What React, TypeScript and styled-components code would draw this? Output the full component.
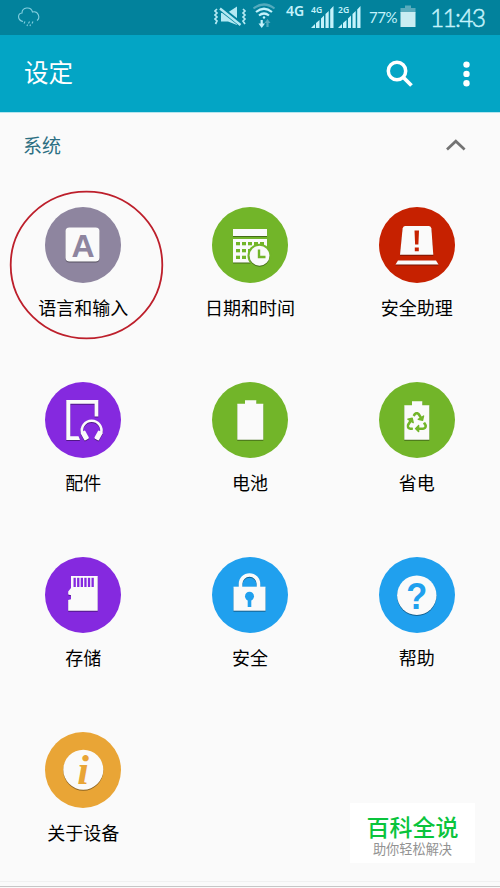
import React from "react";
import styled, { createGlobalStyle } from "styled-components";
import { FaRecycle } from "react-icons/fa";

const GlobalStyle = createGlobalStyle`
  * { box-sizing: border-box; }
  body {
    margin: 0;
    background: #fafafa;
    font-family: "Noto Sans CJK SC", "Noto Sans", sans-serif;
  }
`;

const Screen = styled.div`
  position: relative;
  width: 500px;
  height: 888px;
  display: flex;
  flex-direction: column;
  overflow: hidden;
  background: #fafafa;
`;

const StatusBar = styled.div`
  flex: none;
  height: 35px;
  display: flex;
  align-items: flex-start;
  padding: 0 13px 0 16px;
  background: #02829c;
  color: #c4f2fb;
`;

const StatusIcon = styled.svg<{ $gap?: number }>`
  flex: none;
  display: block;
  margin-left: ${(p) => p.$gap ?? 0}px;
`;

const Spacer = styled.div`
  flex: 1;
`;

const Network = styled.span`
  width: 19px;
  margin: 3px 0 0 10px;
  font: 600 14px/16px "Noto Sans", sans-serif;
`;

const Percent = styled.span`
  width: 29px;
  margin: 8px 0 0 7px;
  font: 400 15px/18px Lato, sans-serif;
  letter-spacing: -0.5px;
  white-space: nowrap;
`;

const Clock = styled.span`
  width: 57px;
  margin: 4px 0 0 14px;
  font: 300 24.5px/28px Lato, sans-serif;
  letter-spacing: -1.7px;
  white-space: nowrap;
  -webkit-text-stroke: 0.5px #c4f2fb;
`;

const Header = styled.header`
  flex: none;
  height: 78px;
  display: flex;
  align-items: center;
  padding: 0 25px 0 24px;
  background: #03a5c5;
  border-bottom: 1px solid #b5e5ee;
  color: #fff;
`;

const Title = styled.h1`
  flex: 1;
  margin: 0 0 3px;
  font-size: 24.5px;
  line-height: 36px;
  font-weight: 400;
`;

const IconButton = styled.button<{ $gap?: number }>`
  display: flex;
  margin: 0 0 0 ${(p) => p.$gap ?? 0}px;
  padding: 0;
  border: 0;
  background: none;
  color: inherit;
`;

const SectionHeader = styled.div`
  flex: none;
  height: 94px;
  display: flex;
  justify-content: space-between;
  align-items: flex-start;
  padding: 18px 34px 0 23px;
  color: #2c6f82;
  font-size: 19px;
  line-height: 28px;
`;

const Chevron = styled.svg`
  margin-top: 7px;
`;

const Grid = styled.main`
  display: grid;
  grid-template-columns: repeat(3, 1fr);
  grid-auto-rows: 175px;
`;

const Tile = styled.div`
  position: relative;
  display: flex;
  flex-direction: column;
  align-items: center;
`;

const Disc = styled.svg<{ $color: string }>`
  display: block;
  flex: none;
  width: 76px;
  height: 76px;
  border-radius: 50%;
  background: ${(p) => p.$color};
  color: ${(p) => p.$color};
  fill: #fafafa;

  .lift {
    filter: drop-shadow(0.6px 1px 0.4px rgba(0, 0, 0, 0.4));
  }
  .cut {
    fill: currentColor;
  }
`;

const Label = styled.span`
  margin-top: 10px;
  font-size: 18px;
  line-height: 28px;
  color: #000;
  white-space: nowrap;
`;

const Marker = styled.svg`
  position: absolute;
  left: 9px;
  top: -17px;
  pointer-events: none;
`;

const Badge = styled.div`
  position: absolute;
  left: 350px;
  top: 803px;
  width: 125px;
  height: 60px;
  padding-top: 8px;
  background: #fff;
  text-align: center;
`;

const BadgeTitle = styled.div`
  color: #0ac43c;
  font-size: 23px;
  font-weight: 500;
  line-height: 30px;
`;

const BadgeText = styled.div`
  color: #929292;
  font-size: 13.2px;
  line-height: 15px;
`;

const BottomEdge = styled.div`
  position: absolute;
  left: 0;
  right: 0;
  bottom: 1px;
  height: 6px;
  border-top: 1px solid #f0f0f0;
  border-bottom: 1px solid #c6c6c6;
`;

const Signal = ({ name, gap }: { name: string; gap: number }) => (
  <StatusIcon $gap={gap} width="24" height="35" fill="#c4f2fb">
    <text x="0" y="13" fontFamily="Noto Sans" fontWeight="600" fontSize="8.6">{name}</text>
    <path d="M0 28 4 24V28ZM5 23 8.500 20V28H5ZM10 18.500 13 15.500V28H10ZM14.500 14 17.700 11V28H14.500ZM19.200 9.500 22.500 6V28H19.200Z" />
  </StatusIcon>
);

const tiles: { label: string; color: string; icon: React.ReactNode }[] = [
  {
    label: "语言和输入",
    color: "#8e859f",
    icon: (
      <>
        <rect className="lift" x="20.500" y="20.500" width="34" height="34" rx="4" />
        <text className="cut" x="38" y="49.500" textAnchor="middle" fontFamily="Liberation Sans" fontWeight="700" fontSize="32">A</text>
      </>
    ),
  },
  {
    label: "日期和时间",
    color: "#72b529",
    icon: (
      <>
        <g className="lift">
          <rect x="21" y="22" width="34" height="7" />
          <rect x="21" y="32" width="34" height="23.500" />
        </g>
        {[35, 42, 48.7].map((y) =>
          [24, 30, 36, 42, 48].map((x) => (
            <rect className="cut" key={`${x}-${y}`} x={x} y={y} width="4" height="3.300" />
          ))
        )}
        <circle className="cut" cx="47.500" cy="48.700" r="12" />
        <circle className="lift" cx="47.500" cy="48.700" r="10" />
        <path d="M47 42.500V50H53.500" fill="none" stroke="currentColor" strokeWidth="2.400" />
      </>
    ),
  },
  {
    label: "安全助理",
    color: "#c62100",
    icon: (
      <>
        <path className="lift" d="M26 19H50Q52 19 52.400 21.500L54.300 47.700H21L23.600 21.500Q24 19 26 19Z" />
        <path className="lift" d="M19 53.500H57L59.500 57.500H16.500Z" />
        <path className="cut" d="M35.500 23.500H40L39.400 37.500H36.100ZM35.800 40.500H39.800V44.300H35.800Z" />
      </>
    ),
  },
  {
    label: "配件",
    color: "#8529df",
    icon: (
      <g className="lift">
        <path d="M21.300 18H53.300V34.500H49.600V21.800H25.300V54.200H33.500L35 58H21.300Z" />
        <path d="M37.300 51.500A9.800 9.800 0 1 1 56 51.500" fill="none" stroke="#fafafa" strokeWidth="2.600" />
        <rect x="-2.600" y="-4.500" width="5.200" height="9" rx="1" transform="translate(39.800 53.500) rotate(-28)" />
        <rect x="-2.600" y="-4.500" width="5.200" height="9" rx="1" transform="translate(53.500 53.500) rotate(28)" />
      </g>
    ),
  },
  {
    label: "电池",
    color: "#72b529",
    icon: <path className="lift" d="M25.300 21.700H33V18.300H44.300V21.700H51.300V57.700H25.300Z" />,
  },
  {
    label: "省电",
    color: "#72b529",
    icon: (
      <>
        <path className="lift" d="M25.300 23.300H33V19.300H43.300V23.300H50.300V57.700H25.300Z" />
        <FaRecycle className="cut" x={27.5} y={30} size={20.5} />
      </>
    ),
  },
  {
    label: "存储",
    color: "#8529df",
    icon: (
      <>
        <path className="lift" d="M26 19H52.700V53.700H23.200V43L26 42.300V38.300L23.200 37.500V34.500L26 31Z" />
        {[0, 1, 2, 3, 4, 5].map((i) => (
          <rect className="cut" key={i} x={28.5 + i * 3.6} y="20.800" width="2.300" height="9.200" />
        ))}
      </>
    ),
  },
  {
    label: "安全",
    color: "#20a0ee",
    icon: (
      <>
        <g className="lift">
          <path d="M28.500 31V27A9 9 0 0 1 46.500 27V31" fill="none" stroke="#fafafa" strokeWidth="3.600" />
          <rect x="21.500" y="29.700" width="32" height="24" />
        </g>
        <circle className="cut" cx="37.500" cy="39.300" r="4.500" />
        <rect className="cut" x="35.700" y="41" width="3.600" height="9" />
      </>
    ),
  },
  {
    label: "帮助",
    color: "#20a0ee",
    icon: (
      <>
        <circle className="lift" cx="37.800" cy="38.300" r="19.700" />
        <text className="cut" x="37.800" y="52" textAnchor="middle" fontFamily="Liberation Sans" fontWeight="700" fontSize="37" transform="translate(2.600 0) scale(.93 1)">?</text>
      </>
    ),
  },
  {
    label: "关于设备",
    color: "#e9a536",
    icon: (
      <>
        <circle className="lift" cx="38.300" cy="37.700" r="20" />
        <text className="cut" x="38" y="51.500" textAnchor="middle" fontFamily="Liberation Serif" fontStyle="italic" fontWeight="700" fontSize="42">i</text>
      </>
    ),
  },
];

export default function App() {
  return (
    <Screen>
      <GlobalStyle />
      <StatusBar>
        <StatusIcon width="26" height="35" fill="none" stroke="#83cfdf" strokeWidth="1.100">
          <path d="M7 21.500C1 20 1.500 13.500 6 13C6 7 15 6 16.500 12C22.500 10.500 24.500 18 21 20.500" />
          <path d="M9 21.500 8 23.500M13.500 21.500 12.500 23.500M17 21.500 16 23.500M11.500 24.500 11 26M14.500 24.500 14 26" />
        </StatusIcon>
        <Spacer />
        <StatusIcon width="34" height="35" fill="#b4e9f3">
          <path d="M7 13H13L23 6.500V25L14 21.500H7Z" />
          <path d="M6 8 27 24.500" stroke="#02829c" strokeWidth="5" />
          <path d="M6 8.500 26.500 25" stroke="#b4e9f3" strokeWidth="2.400" />
          <path d="M3 9 1 11 3 13 1 15 3 17 1 19 3 21 1.500 24M29 9 31 11 29 13 31 15 29 17 31 19 29 21 31 24" fill="none" stroke="#b4e9f3" strokeWidth="1.700" />
        </StatusIcon>
        <StatusIcon $gap={4} width="24" height="35" fill="none" stroke="#c4f2fb" strokeWidth="2.200">
          <path d="M1.500 8.500Q12 .5 22.500 8.500" stroke="#53aabd" />
          <path d="M4 12Q12 5.500 20 12M7 15.500Q12 11.500 17 15.500" />
          <circle cx="12" cy="17.500" r="1.200" fill="#c4f2fb" stroke="none" />
          <path d="M9.700 20V25" />
          <path d="M6.500 23.500H13L9.700 28Z" fill="#c4f2fb" stroke="none" />
          <path d="M15.500 22V27" stroke="#53aabd" />
          <path d="M12.500 23 15.500 19 18.500 23Z" fill="#53aabd" stroke="none" />
        </StatusIcon>
        <Network>4G</Network>
        <Signal name="4G" gap={6} />
        <Signal name="2G" gap={3} />
        <Percent>77%</Percent>
        <StatusIcon $gap={2} width="16" height="35" fill="#c9edf2">
          <path d="M5 5.500H11V8H15.500V13H.5V8H5Z" fill="#59abbc" />
          <rect x=".500" y="12" width="15" height="15" />
        </StatusIcon>
        <Clock>11:43</Clock>
      </StatusBar>
      <Header>
        <Title>设定</Title>
        <IconButton aria-label="搜索">
          <svg width="28" height="28" fill="none" stroke="#fff">
            <circle cx="11" cy="11" r="8.700" strokeWidth="3.500" />
            <path d="M17 17 25.500 25.500" strokeWidth="3.800" />
          </svg>
        </IconButton>
        <IconButton aria-label="更多" $gap={43}>
          <svg width="18" height="28" fill="#fff">
            <circle cx="9.500" cy="4.600" r="3.200" />
            <circle cx="9.500" cy="13.900" r="3.200" />
            <circle cx="9.500" cy="23.200" r="3.200" />
          </svg>
        </IconButton>
      </Header>
      <SectionHeader>
        系统
        <Chevron width="20" height="14" fill="none" stroke="#737373" strokeWidth="2.700">
          <path d="M1 11.500 9.800 3.200 18.600 11.500" />
        </Chevron>
      </SectionHeader>
      <Grid>
        {tiles.map((t, i) => (
          <Tile key={t.label}>
            <Disc $color={t.color} viewBox="0 0 76 76">{t.icon}</Disc>
            <Label>{t.label}</Label>
            {i === 0 && (
              <Marker width="156" height="150" fill="none" stroke="#bd1f2b" strokeWidth="1.800">
                <ellipse cx="77.500" cy="75" rx="75.800" ry="73.300" />
              </Marker>
            )}
          </Tile>
        ))}
      </Grid>
      <BottomEdge />
      <Badge>
        <BadgeTitle>百科全说</BadgeTitle>
        <BadgeText>助你轻松解决</BadgeText>
      </Badge>
    </Screen>
  );
}
